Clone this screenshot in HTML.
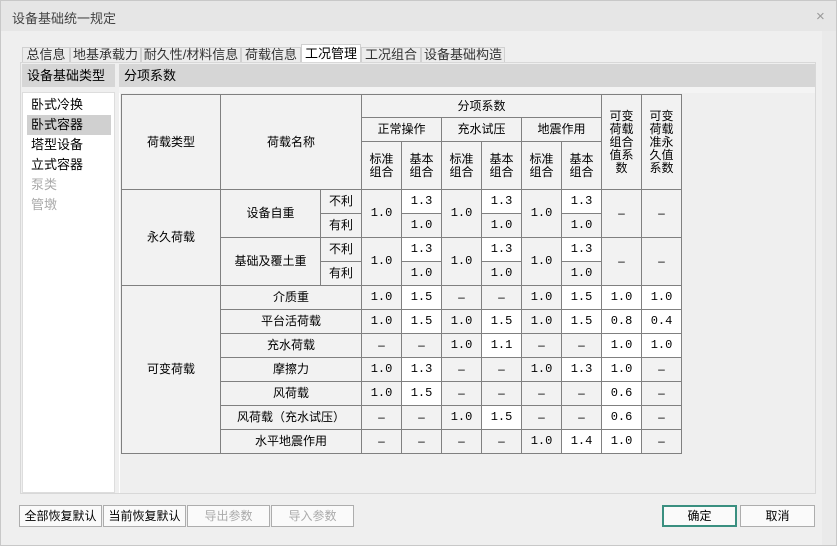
<!DOCTYPE html>
<html><head><meta charset="utf-8"><style>
*{margin:0;padding:0;box-sizing:border-box}
body{width:837px;height:546px;background:#efefef;font-family:"Liberation Sans","Noto Sans CJK SC",sans-serif;font-size:12px;color:#000;position:relative;overflow:hidden}
.a{position:absolute}
#frame{left:0;top:0;width:837px;height:546px;border:1px solid #c8c8c8}
#title{left:1px;top:1px;width:835px;height:30px;background:#e6e6e6}
.tab{position:absolute;top:47px;height:16px;border:1px solid #d0d0d0;border-bottom:none;background:#ececec;color:#333;font-size:13px;line-height:14px;text-align:center}
#panel{left:20px;top:62px;width:796px;height:432px;border:1px solid #d8d8d8;background:#efefef}
.hdr{background:#d6d6d6;height:23px;line-height:23px;font-size:13px;padding-left:5px}
#list{left:22px;top:92px;width:93px;height:401px;background:#fff;border:1px solid #ddd}
.it{position:absolute;left:8px;font-size:13px;line-height:18px}
table{position:absolute;left:121px;top:94px;border-collapse:collapse;table-layout:fixed;background:#f2f2f2}
td{border:1px solid #808080;text-align:center;vertical-align:middle;font-size:12px;line-height:13px;padding:0;background:#f2f2f2}
td.n{font-family:"Liberation Mono",monospace;font-size:12px}
td.w{background:#fff}
.btn{position:absolute;top:505px;height:22px;border:1px solid #adadad;background:#fafafa;font-size:12px;line-height:20px;text-align:center}
</style></head><body>
<div class="a" id="frame"></div>
<div class="a" id="title"></div>
<div class="a" style="left:12px;top:8px;font-size:13px;color:#444">设备基础统一规定</div>
<div class="a" style="left:816px;top:8px;font-size:15px;color:#999">×</div>
<div class="a" style="left:822px;top:31px;width:14px;height:514px;background:#eaeaea"></div>

<div class="tab" style="left:22px;width:48px">总信息</div>
<div class="tab" style="left:70px;width:71px">地基承载力</div>
<div class="tab" style="left:141px;width:100px">耐久性/材料信息</div>
<div class="tab" style="left:241px;width:60px">荷载信息</div>
<div class="tab" style="left:301px;top:44px;height:19px;width:60px;background:#fff;line-height:18px;color:#000">工况管理</div>
<div class="tab" style="left:361px;width:60px">工况组合</div>
<div class="tab" style="left:421px;width:84px">设备基础构造</div>

<div class="a" id="panel"></div>
<div class="a hdr" style="left:22px;top:64px;width:93px">设备基础类型</div>
<div class="a hdr" style="left:119px;top:64px;width:696px">分项系数</div>
<div class="a" style="left:119px;top:87px;width:696px;height:6px;background:#f4f4f4"></div>
<div class="a" id="list">
<div class="a" style="left:4px;top:22px;width:84px;height:20px;background:#d0d0d0"></div>
<div class="it" style="top:3px">卧式冷换</div>
<div class="it" style="top:23px">卧式容器</div>
<div class="it" style="top:43px">塔型设备</div>
<div class="it" style="top:63px">立式容器</div>
<div class="it" style="top:83px;color:#aaa">泵类</div>
<div class="it" style="top:103px;color:#aaa">管墩</div>
</div>
<div class="a" style="left:119px;top:93px;width:1px;height:400px;background:#fff"></div>

<table>
<colgroup><col style="width:99px"><col style="width:100px"><col style="width:41px"><col span="8" style="width:40px"></colgroup>
<tr style="height:23px"><td rowspan="3">荷载类型</td><td rowspan="3" colspan="2">荷载名称</td><td colspan="6">分项系数</td><td rowspan="3">可变<br>荷载<br>组合<br>值系<br>数</td><td rowspan="3">可变<br>荷载<br>准永<br>久值<br>系数</td></tr>
<tr style="height:24px"><td colspan="2">正常操作</td><td colspan="2">充水试压</td><td colspan="2">地震作用</td></tr>
<tr style="height:48px"><td>标准<br>组合</td><td>基本<br>组合</td><td>标准<br>组合</td><td>基本<br>组合</td><td>标准<br>组合</td><td>基本<br>组合</td></tr>
<tr style="height:24px"><td rowspan="4">永久荷载</td><td rowspan="2">设备自重</td><td>不利</td><td class="n" rowspan="2">1.0</td><td class="n w">1.3</td><td class="n" rowspan="2">1.0</td><td class="n w">1.3</td><td class="n" rowspan="2">1.0</td><td class="n w">1.3</td><td rowspan="2">–</td><td rowspan="2">–</td></tr>
<tr style="height:24px"><td>有利</td><td class="n">1.0</td><td class="n">1.0</td><td class="n">1.0</td></tr>
<tr style="height:24px"><td rowspan="2">基础及覆土重</td><td>不利</td><td class="n" rowspan="2">1.0</td><td class="n w">1.3</td><td class="n" rowspan="2">1.0</td><td class="n w">1.3</td><td class="n" rowspan="2">1.0</td><td class="n w">1.3</td><td rowspan="2">–</td><td rowspan="2">–</td></tr>
<tr style="height:24px"><td>有利</td><td class="n">1.0</td><td class="n">1.0</td><td class="n">1.0</td></tr>
<tr style="height:24px"><td rowspan="7">可变荷载</td><td colspan="2">介质重</td><td class="n">1.0</td><td class="n w">1.5</td><td>–</td><td>–</td><td class="n">1.0</td><td class="n w">1.5</td><td class="n w">1.0</td><td class="n w">1.0</td></tr>
<tr style="height:24px"><td colspan="2">平台活荷载</td><td class="n">1.0</td><td class="n w">1.5</td><td class="n">1.0</td><td class="n w">1.5</td><td class="n">1.0</td><td class="n w">1.5</td><td class="n w">0.8</td><td class="n w">0.4</td></tr>
<tr style="height:24px"><td colspan="2">充水荷载</td><td>–</td><td>–</td><td class="n">1.0</td><td class="n w">1.1</td><td>–</td><td>–</td><td class="n w">1.0</td><td class="n w">1.0</td></tr>
<tr style="height:24px"><td colspan="2">摩擦力</td><td class="n">1.0</td><td class="n w">1.3</td><td>–</td><td>–</td><td class="n">1.0</td><td class="n w">1.3</td><td class="n w">1.0</td><td>–</td></tr>
<tr style="height:24px"><td colspan="2">风荷载</td><td class="n">1.0</td><td class="n w">1.5</td><td>–</td><td>–</td><td>–</td><td>–</td><td class="n w">0.6</td><td>–</td></tr>
<tr style="height:24px"><td colspan="2">风荷载（充水试压）</td><td>–</td><td>–</td><td class="n">1.0</td><td class="n w">1.5</td><td>–</td><td>–</td><td class="n w">0.6</td><td>–</td></tr>
<tr style="height:24px"><td colspan="2">水平地震作用</td><td>–</td><td>–</td><td>–</td><td>–</td><td class="n">1.0</td><td class="n w">1.4</td><td class="n w">1.0</td><td>–</td></tr>
</table>

<div class="btn" style="left:19px;width:83px">全部恢复默认</div>
<div class="btn" style="left:103px;width:83px">当前恢复默认</div>
<div class="btn" style="left:187px;width:83px;color:#aaa">导出参数</div>
<div class="btn" style="left:271px;width:83px;color:#aaa">导入参数</div>
<div class="btn" style="left:662px;width:75px;border:2px solid #3a8f80;line-height:18px">确定</div>
<div class="btn" style="left:740px;width:75px">取消</div>
</body></html>
